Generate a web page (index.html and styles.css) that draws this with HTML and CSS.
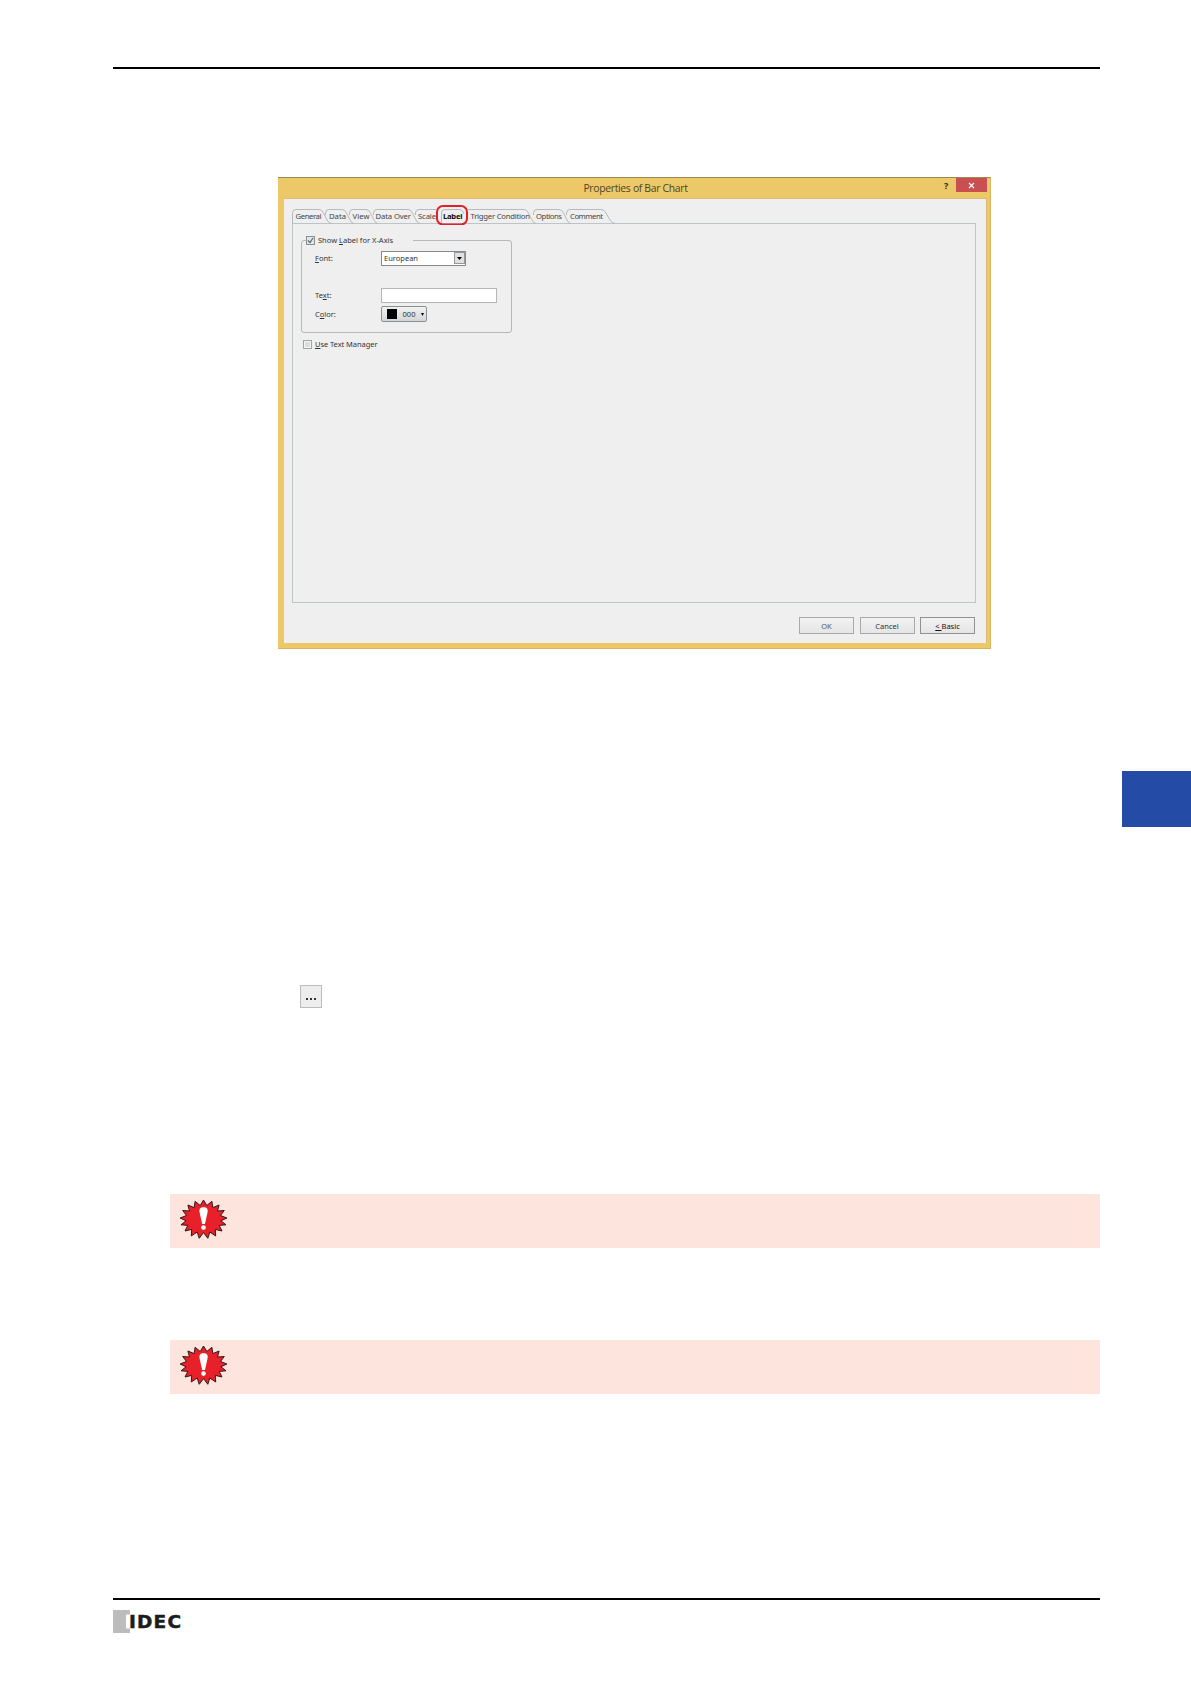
FILE: index.html
```
<!DOCTYPE html>
<html lang="en">
<head>
<meta charset="utf-8">
<title>Properties of Bar Chart</title>
<link rel="stylesheet" href="styles.css">
</head>
<body>
<svg width="0" height="0" class="defs">
  <symbol id="burst" viewBox="0 0 48 40">
    <path transform="translate(23.500 0)" d="M0 1 3.300 6.500 8.400 2.300 9.300 8.600 15.600 6 14 12 20.800 11.500 17 16.500 23.400 19 17.400 21.800 22.500 25.800 15.700 26.400 18.500 32 11.800 30.400 12.200 37 6.300 33 4.300 39.300 0 33.600 -4.300 39.300 -6.300 33 -12.200 37 -11.800 30.400 -18.500 32 -15.700 26.400 -22.500 25.800 -17.400 21.800 -23.400 19 -17 16.500 -20.800 11.500 -14 12 -15.600 6 -9.300 8.600 -8.400 2.300 -3.300 6.500Z" fill="#e8202a" stroke="#35171a" stroke-width="1"/>
    <path d="M23.500 8.200C26.900 8.200 28.100 10.200 27.600 13L25 25H22.200L19.500 13C19 10.200 20.200 8.200 23.500 8.200Z" fill="#fff"/>
    <circle cx="23.500" cy="28.600" r="2.300" fill="#fff"/>
  </symbol>
</svg>
<main class="page">
  <hr class="rule">
  <section class="dialog">
    <header class="titlebar">
      <h1>Properties of Bar Chart</h1>
      <span class="help">?</span>
      <span class="close"><svg width="7" height="7" viewBox="0 0 7 7"><path d="M1 1 6 6M6 1 1 6" stroke="#fff" stroke-width="1.2"/></svg></span>
    </header>
    <div class="client">
      <svg class="tabs" width="330" height="20" viewBox="0 0 330 20">
        <g fill="none" stroke="#b4babd" stroke-width="1">
          <path d="M.5 18V8Q.5 4.500 4 4.500H27Q30 4.500 31.500 8L35 15Q36.500 18.500 40 18.500"/>
          <path d="M33.500 10V8Q33.500 4.500 37 4.500H50Q53 4.500 54.500 8L58 15Q59.500 18.500 62 18.500"/>
          <path d="M57.500 10V8Q57.500 4.500 61 4.500H74Q77 4.500 78.500 8L82 15Q83.500 18.500 86 18.500"/>
          <path d="M81.500 10V8Q81.500 4.500 85 4.500H116Q119 4.500 120.500 8L124 15Q125.500 18.500 128 18.500"/>
          <path d="M123.500 10V8Q123.500 4.500 127 4.500H144"/>
          <path d="M149.500 18V8Q149.500 4.500 153 4.500H168Q171 5 172 9"/>
          <path d="M176 4.500H232Q235 4.500 236.500 8L240 15Q241.500 18.500 244 18.500"/>
          <path d="M241.500 10V8Q241.500 4.500 245 4.500H267Q270 4.500 271.500 8L275 15Q276.500 18.500 279 18.500"/>
          <path d="M274.500 10V8Q274.500 4.500 278 4.500H309Q312 4.500 314 8L318 15Q320 18.500 323 18.500"/>
        </g>
        <g class="tab-text">
          <text x="3.500" y="13.500" textLength="26">General</text>
          <text x="37" y="13.500" textLength="17">Data</text>
          <text x="60.500" y="13.500" textLength="17">View</text>
          <text x="83.500" y="13.500" textLength="35.500">Data Over</text>
          <text x="126" y="13.500" textLength="18">Scale</text>
          <text class="current" x="151" y="14" textLength="19.500">Label</text>
          <text x="178.500" y="13.500" textLength="59.500">Trigger Condition</text>
          <text x="244" y="13.500" textLength="26">Options</text>
          <text x="278" y="13.500" textLength="33">Comment</text>
        </g>
        <rect x="145" y="1" width="30" height="18.500" rx="6" fill="none" stroke="#dc2129" stroke-width="2"/>
      </svg>
      <div class="panel">
        <fieldset class="group">
          <legend><span class="check"><svg width="7" height="7" viewBox="0 0 7 7"><path d="M1 3.500 3 5.500 6 1" fill="none" stroke="#596568" stroke-width="1.200"/></svg></span><span>Show <u>L</u>abel for X-Axis</span></legend>
          <div class="row font-row"><label><u>F</u>ont:</label><span class="select"><span>European</span><i><svg width="5" height="3"><path d="M0 0H5L2.500 3Z"/></svg></i></span></div>
          <div class="row text-row"><label>Te<u>x</u>t:</label><span class="input"></span></div>
          <div class="row color-row"><label>C<u>o</u>lor:</label><span class="color"><i class="swatch"></i><span>000</span><svg width="3" height="3"><path d="M0 0H3L1.500 3Z"/></svg></span></div>
        </fieldset>
        <div class="manager"><span class="check off"></span><span><u>U</u>se Text Manager</span></div>
      </div>
      <footer class="actions"><button class="ok">OK</button><button>Cancel</button><button class="basic"><u>&lt; </u>Basic</button></footer>
    </div>
  </section>
  <div class="chapter-tab"></div>
  <div class="browse"><i></i><i></i><i></i></div>
  <aside class="notice first"><svg width="48" height="40"><use href="#burst"/></svg></aside>
  <aside class="notice second"><svg width="48" height="40"><use href="#burst"/></svg></aside>
  <hr class="rule">
  <div class="logo">
    <svg width="80" height="24" viewBox="0 0 80 24">
      <path d="M0 0H17V4.500H13V18.500H17V23H0Z" fill="#bcbcbc"/>
      <text x="16" y="18" textLength="52" lengthAdjust="spacing">IDEC</text>
    </svg>
  </div>
</main>
</body>
</html>
```
FILE: styles.css
```
* { box-sizing: border-box; }
body { margin: 0; background: #fff; font-family: "Noto Sans", "Open Sans", sans-serif; }
.defs { display: block; }
.page { display: flex; flex-direction: column; width: 1191px; height: 1684px; padding-top: 67px; }
.page > * { flex-shrink: 0; }
.rule { width: 987px; height: 2px; margin: 0 0 0 113px; border: 0; background: #000; }

.dialog { width: 713px; height: 472px; margin: 108px 0 0 278px; padding: 0 3px 5px 6px; background: #ecc869; border: solid #d4b563; border-width: 1px 1px 1px 0; border-top-color: #9c8a50; display: flex; flex-direction: column; }
.titlebar { height: 20px; display: flex; align-items: flex-start; }
.titlebar h1 { flex: 1; margin: 0 0 0 43px; text-align: center; font: 400 10.400px/20px "Open Sans", sans-serif; letter-spacing: -.32px; color: #4e4528; }
.help { width: 9px; margin-right: 3px; font: 700 9px/15px "Open Sans", sans-serif; color: #2a251a; }
.close { width: 31px; height: 14px; background: #c94f50; display: flex; align-items: center; justify-content: center; }
.client { flex: 1; background: #efefef; border: 1px solid #dfb977; border-width: 1px 1px 0 0; padding: 6px 10px 0 8px; display: flex; flex-direction: column; font-size: 7.500px; color: #333; }
.tabs { display: block; position: relative; z-index: 1; }
.tab-text { font: 7.700px "Noto Sans", sans-serif; fill: #444; }
.current { font-weight: 700; fill: #111; }
.panel { height: 380px; margin-top: -2px; border: 1px solid #bdc5c9; padding: 11px 9px 0 8px; }
.group { position: relative; width: 211px; height: 98px; margin: 0; padding: 0 0 0 13px; border: 1px solid #b4b9bb; border-radius: 3px; }
.group legend { display: flex; align-items: center; gap: 3px; height: 10px; width: 107px; margin-left: -9px; padding: 0; line-height: 10px; white-space: nowrap; }
.check { width: 9px; height: 9px; border: 1px solid #879092; background: #e3e6e7; display: flex; align-items: center; justify-content: center; flex: none; }
.check.off { border-color: #a0a4a6; box-shadow: inset 0 0 0 1px #f5f5f5; background: #ddd; }
.row { display: flex; align-items: center; height: 16px; }
.row label { width: 66px; }
.font-row { margin-top: 5px; }
.text-row { margin-top: 21px; }
.color-row { margin-top: 3px; }
.select { width: 85px; height: 15px; border: 1px solid #858a8c; background: #fff; display: flex; justify-content: space-between; align-items: center; padding-left: 2px; line-height: 12px; }
.select i { width: 11px; height: 12px; border: 1px solid #999; background: #dfe1e2; display: flex; align-items: center; justify-content: center; }
.input { width: 116px; height: 15px; border: 1px solid #b4b6b8; background: #fff; }
.color { width: 46px; height: 16px; border: 1px solid #8b8f91; border-radius: 2px; background: linear-gradient(#f1f1f1, #d3d6d8); display: flex; align-items: center; padding: 0 2px 0 5px; justify-content: space-between; }
.swatch { width: 10px; height: 10px; background: #000; }
.manager { display: flex; align-items: center; gap: 3px; margin-top: 5px; padding-left: 2px; height: 12px; letter-spacing: -.06px; }
.actions { display: flex; justify-content: flex-end; gap: 5.500px; margin: 14px 1px 0 0; }
.actions button { width: 55px; height: 17px; padding: 0; border: 1px solid #a9a9a9; background: linear-gradient(#f2f2f2, #e5e5e5); font: 7.500px/12px "Noto Sans", sans-serif; color: #333; }
.actions .ok { color: #555; }
.actions .basic { border-color: #919191; color: #111; }
u { text-underline-offset: 1px; text-decoration-thickness: 1px; }

.chapter-tab { width: 69px; height: 56px; margin: 122px 0 0 1122px; background: #244ba5; }
.browse { width: 22px; height: 23px; margin: 158px 0 0 300px; border: 1px solid #bcbcbc; background: #ededed; display: flex; gap: 2px; justify-content: center; padding-top: 12px; }
.browse i { width: 2px; height: 2px; background: #333; }
.notice { width: 930px; height: 54px; margin-left: 170px; background: #fde4dc; padding: 5px 0 0 10px; }
.notice svg { display: block; }
.first { margin-top: 186px; }
.second { margin-top: 92px; margin-bottom: 204px; }
.logo { margin: 10px 0 0 113px; }
.logo svg { display: block; overflow: visible; }
.logo text { font: 700 18.500px "DejaVu Sans", sans-serif; fill: #1c1c1c; stroke: #1c1c1c; stroke-width: .5px; }
```
